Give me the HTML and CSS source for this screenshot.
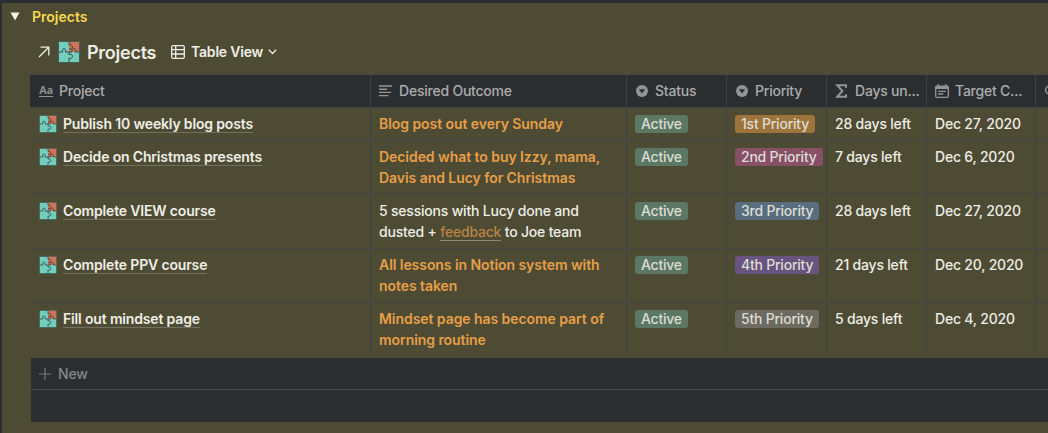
FILE: index.html
```html
<!DOCTYPE html>
<html lang="en">
<head>
<meta charset="utf-8">
<title>Projects</title>
<link rel="stylesheet" href="styles.css">
</head>
<body>
<svg width="0" height="0" class="defs">
  <symbol id="puzzle" viewBox="0 0 22 22">
    <rect x="0.5" y="0.5" width="21" height="21" rx="0.8" fill="#74cdbb"/>
    <path d="M11 .5h10.500V11H11z" fill="#cf7455"/>
    <path d="M11 1v3c2-.3 3.500.5 3.500 1.800S13 8.500 11 8M11 11v2.500c2-.5 3.500.3 3.500 1.800S13 17.500 11 17.300V21M1 11h3.500c-.3-2.300.3-3.500 1.500-3.500S7.800 8.700 7.500 11h6.500c-.5-2.300.3-3.500 1.700-3.500s2.300 1.200 1.800 3.500H21" fill="none" stroke="#34494a" stroke-width="1"/>
    <rect x="0.5" y="0.5" width="21" height="21" rx="0.8" fill="none" stroke="#34494a" stroke-width=".7"/>
  </symbol>
  <symbol id="select" viewBox="0 0 12 12">
    <circle cx="6" cy="6" r="6" fill="#929496"/>
    <path d="M2.800 4.300h6.400L6 8.400z" fill="#2b2e31"/>
  </symbol>
</svg>
<main class="callout">
  <div class="toggle">
    <svg class="triangle" width="10" height="9" viewBox="0 0 10 9"><path d="M.5.500h9L5 8.500z" fill="#f3f2ea"/></svg>
    <span>Projects</span>
  </div>
  <div class="titlebar">
    <svg class="arrow" width="12" height="12" viewBox="0 0 12 12"><path d="M1 11L10.500 1.500M2.500 1.200h8.300v8.300" fill="none" stroke="#efeee6" stroke-width="1.300"/></svg>
    <svg class="logo" width="22" height="22"><use href="#puzzle"/></svg>
    <h1>Projects</h1>
    <svg class="grid-icon" width="14" height="14" viewBox="0 0 14 14"><path d="M2 .7h10A1.300 1.300 0 0 1 13.300 2v10a1.300 1.300 0 0 1-1.300 1.300H2A1.300 1.300 0 0 1 .7 12V2A1.300 1.300 0 0 1 2 .7zM.7 4.700h12.600M.7 9h12.600M4.700.7v12.600" fill="none" stroke="#efeee6" stroke-width="1.300"/></svg>
    <span class="view">Table View</span>
    <svg width="9" height="6" viewBox="0 0 9 6"><path d="M.8.800l3.700 3.700L8.200.800" fill="none" stroke="#efeee6" stroke-width="1.300"/></svg>
  </div>
  <div class="table">
    <div class="row head">
      <div class="cell"><svg class="ic" width="14" height="14" viewBox="0 0 14 14"><text x="0" y="10" class="aa">Aa</text><path d="M0 12.500h14" stroke="#929496"/></svg>Project</div>
      <div class="cell"><svg class="ic" width="14" height="12" viewBox="0 0 14 12"><path d="M0 1h13M0 4.200h8M0 7.400h12M0 10.600h9.500" stroke="#929496" stroke-width="1.400"/></svg>Desired Outcome</div>
      <div class="cell"><svg class="ic" width="14" height="12"><use href="#select" x="1" width="12" height="12"/></svg>Status</div>
      <div class="cell"><svg class="ic" width="14" height="12"><use href="#select" x="1" width="12" height="12"/></svg>Priority</div>
      <div class="cell"><svg class="ic" width="14" height="14" viewBox="0 0 14 14"><path d="M11 3.800V1.200H2.200L7.400 7l-5.200 5.800H11v-2.600" fill="none" stroke="#929496" stroke-width="2"/></svg>Days un...</div>
      <div class="cell"><svg class="ic" width="14" height="14" viewBox="0 0 14 14"><path d="M1.700 2.200h10.600a1 1 0 0 1 1 1v9.100a1 1 0 0 1-1 1H1.700a1 1 0 0 1-1-1V3.200a1 1 0 0 1 1-1zM3.200 0v2M10.800 0v2M3.200 7.300h7.600M3.200 10h5" fill="none" stroke="#929496" stroke-width="1.300"/><path d="M.7 2h12.600v3H.7z" fill="#929496"/></svg>Target C...</div>
      <div class="cell"><svg class="search" width="12" height="12" viewBox="0 0 12 12"><circle cx="5.500" cy="5" r="4" fill="none" stroke="#929496" stroke-width="1.500"/></svg></div>
    </div>
    <div class="row">
      <div class="cell name"><svg width="18" height="18"><use href="#puzzle"/></svg><a>Publish 10 weekly blog posts</a></div>
      <div class="cell strong">Blog post out every Sunday</div>
      <div class="cell"><span class="tag green">Active</span></div>
      <div class="cell"><span class="tag orange">1st Priority</span></div>
      <div class="cell">28 days left</div><div class="cell">Dec 27, 2020</div><div class="cell"></div>
    </div>
    <div class="row">
      <div class="cell name"><svg width="18" height="18"><use href="#puzzle"/></svg><a>Decide on Christmas presents</a></div>
      <div class="cell strong">Decided what to buy Izzy, mama,<br>Davis and Lucy for Christmas</div>
      <div class="cell"><span class="tag green">Active</span></div>
      <div class="cell"><span class="tag pink">2nd Priority</span></div>
      <div class="cell">7 days left</div><div class="cell">Dec 6, 2020</div><div class="cell"></div>
    </div>
    <div class="row">
      <div class="cell name"><svg width="18" height="18"><use href="#puzzle"/></svg><a>Complete VIEW course</a></div>
      <div class="cell">5 sessions with Lucy done and<br>dusted + <a class="link">feedback</a> to Joe team</div>
      <div class="cell"><span class="tag green">Active</span></div>
      <div class="cell"><span class="tag blue">3rd Priority</span></div>
      <div class="cell">28 days left</div><div class="cell">Dec 27, 2020</div><div class="cell"></div>
    </div>
    <div class="row">
      <div class="cell name"><svg width="18" height="18"><use href="#puzzle"/></svg><a>Complete PPV course</a></div>
      <div class="cell strong">All lessons in Notion system with<br>notes taken</div>
      <div class="cell"><span class="tag green">Active</span></div>
      <div class="cell"><span class="tag purple">4th Priority</span></div>
      <div class="cell">21 days left</div><div class="cell">Dec 20, 2020</div><div class="cell"></div>
    </div>
    <div class="row last">
      <div class="cell name"><svg width="18" height="18"><use href="#puzzle"/></svg><a>Fill out mindset page</a></div>
      <div class="cell strong">Mindset page has become part of<br>morning routine</div>
      <div class="cell"><span class="tag green">Active</span></div>
      <div class="cell"><span class="tag gray">5th Priority</span></div>
      <div class="cell">5 days left</div><div class="cell">Dec 4, 2020</div><div class="cell"></div>
    </div>
    <div class="new"><svg width="12" height="12" viewBox="0 0 12 12"><path d="M6 0v12M0 6h12" stroke="#77797b" stroke-width="1.200"/></svg>New</div>
    <div class="footer"></div>
  </div>
</main>
</body>
</html>
```
FILE: styles.css
```css
* { box-sizing: border-box; }
body {
  margin: 0;
  height: 433px;
  padding: 3px 0 0 2px;
  overflow: hidden;
  background: #2b2e31;
  color: #efeee6;
  font: 500 14px/21px Inter, "Liberation Sans", sans-serif;
  letter-spacing: -0.2px;
}
.defs { display: block; height: 0; }
svg { flex: none; }
.callout { height: 430px; background: #4e4b34; }
.toggle {
  display: flex;
  align-items: center;
  height: 27px;
  padding-left: 8px;
  gap: 12px;
  color: #f7d94c;
  font-weight: 600;
  letter-spacing: 0;
}
.titlebar { display: flex; align-items: center; height: 44px; padding: 0 0 1px 36px; }
.arrow { margin-right: 8px; }
.logo { margin-right: 7px; }
h1 { margin: 0; width: 70px; padding-top: 2px; font-size: 18px; font-weight: 600; letter-spacing: -0.25px; }
.grid-icon { margin: 0 6px 0 14px; }
.view { width: 73px; margin-right: 4px; font-weight: 600; letter-spacing: -0.2px; white-space: nowrap; }
.table { margin-left: 28px; }
.row {
  display: grid;
  grid-template-columns: 341px 256px 100px 100px 100px 109px 12px;
  width: 1018px;
  border-bottom: 1px solid #43454a;
}
.cell {
  padding: 5px 0 6px 8px;
  border-right: 1px solid #3f4144;
  white-space: nowrap;
  overflow: hidden;
}
.cell:first-child { padding-left: 9px; }
.cell:last-child { border-right: 0; }
.head {
  height: 34px;
  background: #2b2e31;
  border-top: 1px solid #43464a;
  color: #abacad;
  letter-spacing: -0.22px;
}
.head .cell { display: flex; align-items: center; }
.ic { margin-right: 6px; }
.aa { font: 600 11px Inter, sans-serif; fill: #929496; }
.name { display: flex; gap: 6px; font-weight: 600; letter-spacing: -0.16px; }
.name svg { margin-top: 2px; }
.name a { height: 19px; margin-top: 1px; line-height: 20px; border-bottom: 1px solid #716f5d; }
.strong { color: #e69f47; font-weight: 600; letter-spacing: -0.06px; }
.link { border-bottom: 1px solid #8b8978; color: #b88343; }
.tag {
  display: block;
  width: max-content;
  height: 18px;
  margin-top: 2px;
  padding: 0 6px;
  border-radius: 3px;
  line-height: 18px;
  color: #dddcd4;
  font-weight: 450;
  letter-spacing: -0.22px;
}
.green { background: #5b7864; }
.orange { background: #9c743c; }
.pink { background: #875066; }
.blue { background: #586d7d; }
.purple { background: #69547f; }
.gray { background: #6d6b61; }
.last { height: 55px; border-bottom: 0; }
.last .cell { height: 53px; }
.new {
  display: flex;
  align-items: center;
  gap: 7px;
  height: 32px;
  margin-left: 1px;
  padding-left: 8px;
  background: #2b2e31;
  border-bottom: 1px solid #464a4d;
  color: #858789;
}
.footer { height: 32px; margin-left: 1px; background: #2b2e31; }
```
